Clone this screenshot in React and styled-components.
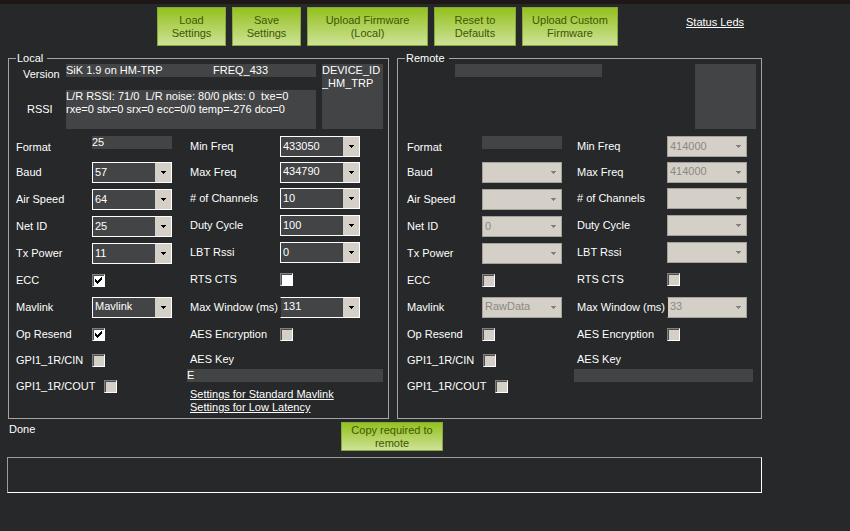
import React, { useId, useState } from 'react';
import styled, { createGlobalStyle } from 'styled-components';

const GlobalStyle = createGlobalStyle`
  * {
    box-sizing: border-box;
  }

  body {
    margin: 0;
    background-color: #262829;
  }

  body, button, input, select, textarea {
    font-family: 'Liberation Sans', Arial, sans-serif;
    font-size: 11px;
    line-height: 13px;
    color: #ffffff;
  }
`;

const Page = styled.div`
  border-top: 4px solid #1d1717;
  padding: 3px 88px 0 7px;
`;

const Toolbar = styled.div`
  display: flex;
  gap: 6px;
  padding-left: 150px;
`;

const GreenButton = styled.button`
  flex: 0 0 ${(props) => props.$width}px;
  min-height: ${(props) => (props.$compact ? 29 : 39)}px;
  padding: 0 6px;
  border: 1px solid #86a83c;
  background: linear-gradient(#94c11f, #cde296);
  color: #405704;
  cursor: pointer;
`;

const TextLink = styled.a`
  color: #ffffff;
  text-decoration: underline;
  white-space: nowrap;
`;

const StatusLink = styled(TextLink)`
  margin: 9px 0 0 62px;
`;

const Panels = styled.div`
  display: grid;
  grid-template-columns: 381fr 365fr;
  gap: 8px;
  margin: 7px 0 0 1px;
`;

const Panel = styled.fieldset`
  min-width: 0;
  margin: 0;
  padding: 0 5px 4px 7px;
  border: 1px solid #a3a4a4;
`;

const PanelTitle = styled.legend`
  padding: 0 4px 0 1px;
  line-height: 11px;
`;

const InfoGrid = styled.div`
  display: grid;
  grid-template-columns: 50px 147px 1fr 61px;
  grid-template-rows: 13px 39px;
  row-gap: 13px;
`;

const InfoLabel = styled.label`
  align-self: center;
  padding: ${(props) => props.$padding};
`;

const TextField = styled.input`
  width: 100%;
  min-width: 0;
  height: 13px;
  padding: 0;
  border: none;
  border-radius: 0;
  background-color: #434445;
`;

const FreqField = styled(TextField)`
  width: calc(100% - 6px);
`;

const FormatField = styled(TextField)`
  align-self: flex-start;
  margin-top: 7px;
`;

const TextBlock = styled.textarea`
  display: block;
  min-width: 0;
  padding: 0;
  border: none;
  background-color: #434445;
  resize: none;
  overflow: hidden;
  white-space: pre;
`;

const RssiBlock = styled(TextBlock)`
  grid-column: 2 / 4;
  grid-row: 2;
  margin-right: 6px;
`;

const DeviceBlock = styled(TextBlock)`
  grid-column: 4;
  grid-row: 1 / 3;
`;

const Columns = styled.div`
  display: flex;
  gap: ${(props) => (props.$remote ? 15 : 18)}px;
  padding: ${(props) => (props.$remote ? '0 3px 0 2px' : '0')};
`;

const LeftColumn = styled.div`
  display: grid;
  grid-template-rows: 30px repeat(4, 27px) 26px 28px repeat(3, 26px);
  flex: none;
  width: ${(props) => (props.$remote ? 155 : 156)}px;
`;

const RightColumn = styled.div`
  flex: 1;
  min-width: 0;
  padding-top: 5px;
`;

const RightRows = styled.div`
  display: grid;
  grid-template-rows: 25px 26px repeat(4, 27px) 28px 26px;
`;

const Row = styled.div`
  display: flex;
  align-items: center;
`;

const LeftLabel = styled.label`
  flex: none;
  min-width: ${(props) => (props.$remote ? 75 : 76)}px;
  padding-right: 9px;
  white-space: nowrap;
`;

const FormatLabel = styled(LeftLabel)`
  padding-top: 6px;
`;

const RightLabel = styled.label`
  flex: none;
  width: 90px;
  white-space: nowrap;
`;

const SelectBox = styled.span`
  position: relative;
  display: block;
  width: 80px;
  height: 21px;
`;

const Select = styled.select`
  appearance: none;
  width: 100%;
  height: 100%;
  padding: 0 17px 1px 2px;
  border: 1px solid #ffffff;
  border-radius: 0;
  background-color: #434445;

  &:disabled {
    border-color: #a5a29c;
    background-color: #d4d0c8;
    color: #8b8883;
    opacity: 1;
  }

  &&& {
    ${(props) => props.$openEdge && 'border-left-color: #262829;'}
  }
`;

const SelectArrow = styled.span`
  position: absolute;
  top: 1px;
  right: 1px;
  bottom: 1px;
  display: flex;
  align-items: center;
  justify-content: center;
  width: 16px;
  background-color: #d4d0c8;
  color: ${(props) => (props.$disabled ? '#808080' : '#000000')};
  pointer-events: none;
`;

const CheckBoxFrame = styled.span`
  position: relative;
  display: block;
  width: 13px;
  height: 13px;

  svg {
    position: absolute;
    top: 3px;
    left: 3px;
    pointer-events: none;
  }
`;

const CheckInput = styled.input`
  appearance: none;
  display: block;
  width: 13px;
  height: 13px;
  margin: 0;
  border: 1px solid;
  border-color: #808080 #ffffff #ffffff #808080;
  background-color: #ffffff;
  box-shadow: inset 1px 1px 0 #505050;

  &:disabled {
    background-color: #d4d0c8;
  }
`;

const KeyLabel = styled.label`
  display: block;
  padding: 6px 0 3px;
`;

const KeyField = styled(TextField)`
  display: block;
  width: calc(100% + 3px);
  margin-left: -3px;
`;

const Links = styled.div`
  display: flex;
  flex-direction: column;
  align-items: flex-start;
  padding-top: 6px;
`;

const Footer = styled.div`
  display: grid;
  grid-template-columns: 334fr 102px 319fr;
  align-items: start;
  margin-top: 3px;
`;

const StatusText = styled.span`
  padding: 1px 0 0 2px;
`;

const Output = styled.output`
  display: block;
  height: 36px;
  margin-top: 6px;
  border: 1px solid;
  border-color: #9b9c9c #ffffff #ffffff #9b9c9c;
`;

const leftFields = [
  { key: 'baud', label: 'Baud', type: 'select' },
  { key: 'airSpeed', label: 'Air Speed', type: 'select' },
  { key: 'netId', label: 'Net ID', type: 'select' },
  { key: 'txPower', label: 'Tx Power', type: 'select' },
  { key: 'ecc', label: 'ECC', type: 'check' },
  { key: 'mavlink', label: 'Mavlink', type: 'select' },
  { key: 'opResend', label: 'Op Resend', type: 'check' },
  { key: 'cin', label: 'GPI1_1R/CIN', type: 'check' },
  { key: 'cout', label: 'GPI1_1R/COUT', type: 'check' },
];

const rightFields = [
  { key: 'minFreq', label: 'Min Freq', type: 'select' },
  { key: 'maxFreq', label: 'Max Freq', type: 'select' },
  { key: 'channels', label: '# of Channels', type: 'select' },
  { key: 'dutyCycle', label: 'Duty Cycle', type: 'select' },
  { key: 'lbtRssi', label: 'LBT Rssi', type: 'select' },
  { key: 'rtsCts', label: 'RTS CTS', type: 'check' },
  { key: 'maxWindow', label: 'Max Window (ms)', type: 'select', openEdge: true },
  { key: 'aes', label: 'AES Encryption', type: 'check' },
];

const localRadio = {
  version: 'SiK 1.9 on HM-TRP',
  freq: 'FREQ_433',
  device: 'DEVICE_ID\n_HM_TRP',
  rssi: 'L/R RSSI: 71/0  L/R noise: 80/0 pkts: 0  txe=0\nrxe=0 stx=0 srx=0 ecc=0/0 temp=-276 dco=0',
  format: '25',
  key: 'E',
  values: {
    baud: '57',
    airSpeed: '64',
    netId: '25',
    txPower: '11',
    ecc: true,
    mavlink: 'Mavlink',
    opResend: true,
    minFreq: '433050',
    maxFreq: '434790',
    channels: '10',
    dutyCycle: '100',
    lbtRssi: '0',
    maxWindow: '131',
  },
  disabled: ['cin', 'cout', 'aes'],
};

const remoteRadio = {
  version: '',
  device: '',
  format: '',
  key: '',
  values: {
    netId: '0',
    mavlink: 'RawData',
    minFreq: '414000',
    maxFreq: '414000',
    maxWindow: '33',
  },
  disabled: [...leftFields, ...rightFields].map((field) => field.key),
};

const ComboBox = ({ id, value, disabled, openEdge }) => (
  <SelectBox>
    <Select id={id} defaultValue={value} disabled={disabled} $openEdge={openEdge}>
      <option value={value}>{value}</option>
    </Select>
    <SelectArrow $disabled={disabled}>
      <svg width="5" height="3" viewBox="0 0 5 3" shapeRendering="crispEdges" aria-hidden="true">
        <path d="M0 0h5v1H4v1H3v1H2V2H1V1H0z" fill="currentColor" />
      </svg>
    </SelectArrow>
  </SelectBox>
);

const CheckBox = ({ id, value, disabled }) => {
  const [checked, setChecked] = useState(value);

  return (
    <CheckBoxFrame>
      <CheckInput
        id={id}
        type="checkbox"
        checked={checked}
        disabled={disabled}
        onChange={(e) => setChecked(e.target.checked)}
      />
      {checked && (
        <svg width="7" height="7" viewBox="0 0 7 7" shapeRendering="crispEdges" aria-hidden="true">
          <path d="M0 2h1v1h1v1h1V3h1V2h1V1h1V0h1v3H6v1H5v1H4v1H3v1H2V6H1V5H0z" fill="#000000" />
        </svg>
      )}
    </CheckBoxFrame>
  );
};

const Field = ({ field, id, radio, label: Label, remote }) => {
  const Control = field.type === 'select' ? ComboBox : CheckBox;
  const emptyValue = field.type === 'select' ? '' : false;

  return (
    <Row>
      <Label htmlFor={id} $remote={remote}>{field.label}</Label>
      <Control
        id={id}
        value={radio.values[field.key] ?? emptyValue}
        disabled={radio.disabled.includes(field.key)}
        openEdge={field.openEdge}
      />
    </Row>
  );
};

const RadioPanel = ({ title, radio, remote, children }) => {
  const id = useId();

  return (
    <Panel>
      <PanelTitle>{title}</PanelTitle>
      <InfoGrid>
        {remote ? <span /> : (
          <InfoLabel htmlFor={`${id}-version`} $padding="7px 0 0 7px">Version</InfoLabel>
        )}
        <TextField id={`${id}-version`} aria-label={`${title} version`} defaultValue={radio.version} readOnly />
        {!remote && (
          <>
            <FreqField aria-label="Frequency band" defaultValue={radio.freq} readOnly />
            <InfoLabel htmlFor={`${id}-rssi`} $padding="0 0 0 11px">RSSI</InfoLabel>
            <RssiBlock id={`${id}-rssi`} defaultValue={radio.rssi} readOnly />
          </>
        )}
        <DeviceBlock aria-label={`${title} device`} defaultValue={radio.device} readOnly />
      </InfoGrid>
      <Columns $remote={remote}>
        <LeftColumn $remote={remote}>
          <Row>
            <FormatLabel htmlFor={`${id}-format`} $remote={remote}>Format</FormatLabel>
            <FormatField id={`${id}-format`} defaultValue={radio.format} readOnly />
          </Row>
          {leftFields.map((field) => (
            <Field
              key={field.key}
              field={field}
              id={`${id}-${field.key}`}
              radio={radio}
              label={LeftLabel}
              remote={remote}
            />
          ))}
        </LeftColumn>
        <RightColumn>
          <RightRows>
            {rightFields.map((field) => (
              <Field
                key={field.key}
                field={field}
                id={`${id}-${field.key}`}
                radio={radio}
                label={RightLabel}
                remote={remote}
              />
            ))}
          </RightRows>
          <KeyLabel htmlFor={`${id}-key`}>AES Key</KeyLabel>
          <KeyField id={`${id}-key`} defaultValue={radio.key} />
          {children}
        </RightColumn>
      </Columns>
    </Panel>
  );
};

const App = () => (
  <>
    <GlobalStyle />
    <Page>
      <Toolbar>
        <GreenButton $width={69}>Load Settings</GreenButton>
        <GreenButton $width={69}>Save Settings</GreenButton>
        <GreenButton $width={121}>Upload Firmware (Local)</GreenButton>
        <GreenButton $width={82}>Reset to Defaults</GreenButton>
        <GreenButton $width={96}>Upload Custom Firmware</GreenButton>
        <StatusLink href="#status-leds">Status Leds</StatusLink>
      </Toolbar>
      <Panels>
        <RadioPanel title="Local" radio={localRadio}>
          <Links>
            <TextLink href="#standard-mavlink">Settings for Standard Mavlink</TextLink>
            <TextLink href="#low-latency">Settings for Low Latency</TextLink>
          </Links>
        </RadioPanel>
        <RadioPanel title="Remote" radio={remoteRadio} remote />
      </Panels>
      <Footer>
        <StatusText>Done</StatusText>
        <GreenButton $compact>Copy required to remote</GreenButton>
      </Footer>
      <Output aria-label="Terminal output" />
    </Page>
  </>
);

export default App;
